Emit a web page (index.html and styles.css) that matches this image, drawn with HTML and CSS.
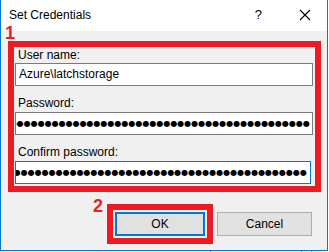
FILE: index.html
```html
<!DOCTYPE html>
<html lang="en">
<head>
  <meta charset="UTF-8" />
  <title>Set Credentials</title>
  <link rel="stylesheet" href="styles.css">
</head>
<body>
<div class="window">
  <div class="titlebar">
    <span class="title">Set Credentials</span>
    <span class="help">?</span>
    <svg class="close" width="12" height="12" viewBox="0 0 12 12">
      <path d="M1 1 L11 11 M11 1 L1 11" stroke="#000" stroke-width="1.1" fill="none"/>
    </svg>
  </div>
  <div class="content">
    <span class="mark mark-1">1</span>
    <div class="group">
      <label class="lbl">User name:</label>
      <div class="field">Azure\latchstorage</div>
      <label class="lbl gap">Password:</label>
      <div class="field pw">●●●●●●●●●●●●●●●●●●●●●●●●●●●●●●●●●●●●●●●●●●●●●●●●●●●●●</div>
      <label class="lbl gap">Confirm password:</label>
      <div class="field pw focus">●●●●●●●●●●●●●●●●●●●●●●●●●●●●●●●●●●●●●●●●●●●●●●●●●●●●●<span class="caret"></span></div>
    </div>
    <div class="buttons">
      <span class="mark mark-2">2</span>
      <div class="hl">
        <button class="btn default">OK</button>
      </div>
      <button class="btn cancel">Cancel</button>
    </div>
  </div>
</div>
<div class="behind">
  <span class="tick t1"></span>
  <span class="tick t2"></span>
  <span class="tick t3"></span>
</div>
</body>
</html>
```

FILE: styles.css
```css
body {
  margin: 0;
  width: 329px;
  height: 252px;
  background: #fff;
  font-family: "Segoe UI", "Liberation Sans", Arial, sans-serif;
  font-size: 12px;
  color: #000;
  overflow: hidden;
}
.window {
  width: 326px;
  border: 1px solid #0078d7;
  border-top: none;
}
.titlebar {
  height: 31px;
  background: #fff;
  display: flex;
  align-items: center;
}
.title {
  margin-left: 8px;
  font-size: 12px;
  flex: 1;
  padding-bottom: 2px;
}
.help {
  font-size: 13px;
  margin-right: 37px;
  padding-bottom: 2px;
}
.close {
  margin-right: 16px;
  margin-bottom: 2px;
}
.content {
  position: relative;
  height: 219px;
  background: #f0f0f0;
  padding-top: 10px;
  box-sizing: border-box;
}
.mark {
  position: absolute;
  color: #ed1c24;
  font-weight: bold;
  font-size: 18px;
  line-height: 1;
  font-family: "Liberation Sans", Arial, sans-serif;
}
.mark-1 {
  left: 4px;
  top: -7px;
}
.group {
  margin-left: 7px;
  width: 300px;
  border: 6px solid #ed1c24;
  padding: 0 0 2px 1px;
}
.lbl {
  display: block;
  height: 16px;
  line-height: 16px;
  padding-left: 3px;
}
.lbl.gap {
  margin-top: 9px;
}
.field {
  width: 293px;
  height: 21px;
  border: 1px solid #7a7a7a;
  background: #fff;
  line-height: 21px;
  padding-left: 3px;
  margin-right: 1px;
  white-space: nowrap;
  overflow: hidden;
}
.field + .lbl + .field {
  margin-top: 1px;
}
.pw {
  width: 292px;
  padding-left: 2px;
  padding-right: 2px;
  display: flex;
  justify-content: flex-end;
  align-items: center;
  font-size: 8px;
  font-family: "DejaVu Sans", sans-serif;
}
.focus {
  width: 290px;
  border-color: #0078d7;
  padding-right: 2px;
}
.caret {
  display: inline-block;
  width: 1px;
  height: 15px;
  background: #000;
  margin-left: 1px;
}
.buttons {
  position: relative;
  display: flex;
  align-items: center;
  margin-top: 12px;
  padding-left: 106px;
}
.mark-2 {
  left: 92px;
  top: -7px;
}
.hl {
  border: 6px solid #ed1c24;
  padding: 2px;
}
.btn {
  display: block;
  height: 24px;
  margin: 0;
  background: #e1e1e1;
  border: 1px solid #adadad;
  font-family: inherit;
  font-size: 12px;
  color: #000;
  padding: 0;
}
.default {
  width: 90px;
  border: 2px solid #0078d7;
}
.cancel {
  width: 95px;
  margin-left: 4px;
}
.behind {
  position: relative;
  height: 1px;
}
.tick {
  position: absolute;
  top: 0;
  width: 1px;
  height: 1px;
  background: #a0a0a0;
}
.t1 { left: 210px; }
.t2 { left: 301px; }
.t3 { left: 311px; }
```
